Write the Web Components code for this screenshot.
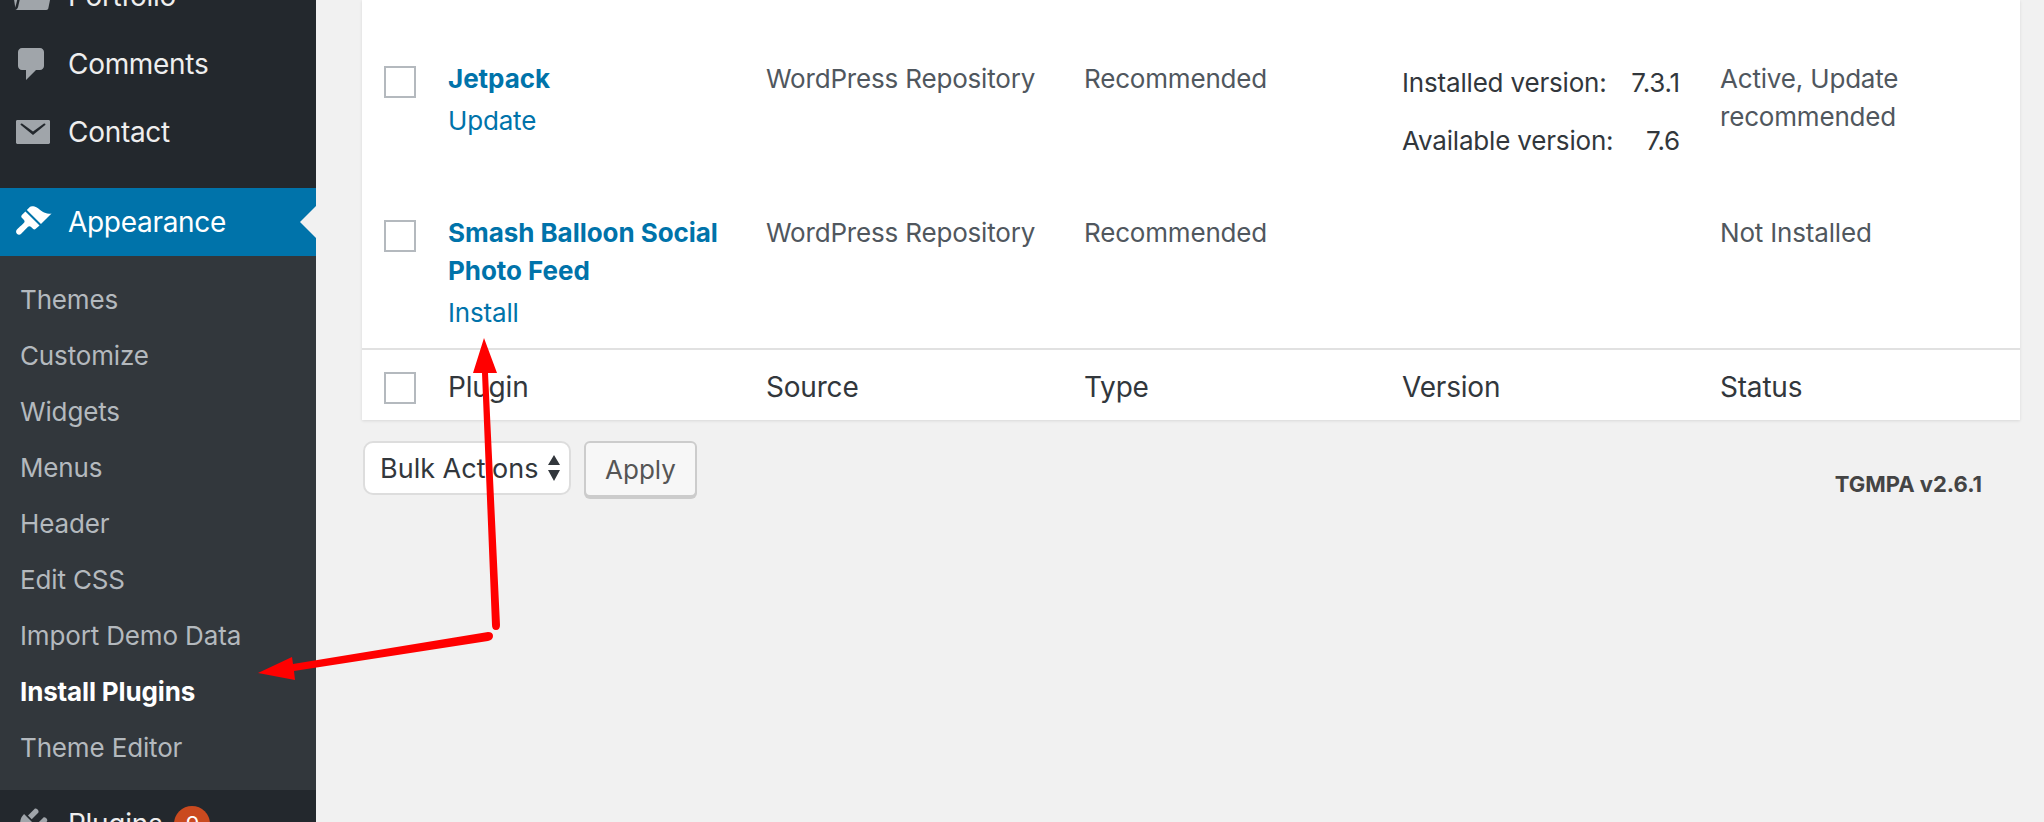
<!DOCTYPE html>
<html>
<head>
<meta charset="utf-8">
<title>Install Plugins</title>
<style>
  html, body { margin: 0; height: 822px; overflow: hidden; background: #f1f1f1; }
  body { position: relative; display: flex; font-family: Inter, "Liberation Sans", sans-serif; font-size: 26px; }
  admin-main { flex: 1; }
  .arrows { position: absolute; left: 0; top: 0; pointer-events: none; }
</style>
</head>
<body>
<admin-menu>
  <menu-item label="Portfolio" icon="portfolio"></menu-item>
  <menu-item label="Comments" icon="comments"></menu-item>
  <menu-item label="Contact" icon="email"></menu-item>
  <menu-item class="sep" label="Appearance" icon="brush" current></menu-item>
  <sub-menu>
    <a>Themes</a><a>Customize</a><a>Widgets</a><a>Menus</a><a>Header</a><a>Edit CSS</a><a>Import Demo Data</a><a class="on">Install Plugins</a><a>Theme Editor</a>
  </sub-menu>
  <menu-item label="Plugins" icon="plugin" badge="9"></menu-item>
</admin-menu>

<admin-main>
  <plugin-table>
    <plugin-row name="Jetpack" action="Update" source="WordPress Repository" type="Recommended" installed="7.3.1" available="7.6">Active, Update recommended</plugin-row>
    <plugin-row name="Smash Balloon Social Photo Feed" action="Install" source="WordPress Repository" type="Recommended">Not Installed</plugin-row>
    <plugin-row footer name="Plugin" source="Source" type="Type" version="Version">Status</plugin-row>
  </plugin-table>
  <table-nav></table-nav>
</admin-main>

<svg class="arrows" width="2044" height="822" fill="#f00" stroke="none">
  <path d="M484 338L497 373L488 373L500 625Q500 630 496 630Q492 630 492 625L482 373L473 373Z"/>
  <path d="M258 673L292 657L293 664L488 632Q493 632 493 636Q493 640 488 641L294 671L295 680Z"/>
</svg>

<script>
const ICONS = {
  portfolio: '<path d="M4 5H.78c-.37 0-.74.32-.69.84l1.56 9.99S3.5 8.47 3.86 6.7c.11-.53.61-.7.98-.7H10s-.7-2.08-.77-2.31C9.11 3.25 8.89 3 8.45 3H5.14c-.36 0-.7.23-.8.64C4.26 3.87 4 5 4 5zM2.67 16.25c-.31.47-.76.75-1.26.75h15.73c.54 0 .92-.31 1.03-.83.44-2.19 1.68-8.44 1.68-8.44.07-.5-.3-.73-.62-.73H5.59c-.32 0-.63.19-.69.5 0 0-1.59 6.7-1.72 7.33-.07.37-.22.99-.51 1.42z"/>',
  comments: '<path d="M5 2h9c1.1 0 2 .9 2 2v7c0 1.1-.9 2-2 2h-2l-5 5v-5H5c-1.1 0-2-.9-2-2V4c0-1.1.9-2 2-2z"/>',
  email: '<path fill-rule="evenodd" d="M2.7 4h15.6c.4 0 .7.3.7.7v10.6c0 .4-.3.7-.7.7H2.700c-.4 0-.7-.3-.7-.7V4.700c0-.4.3-.7.7-.7zM5 5.800c-.5-.3-1 .3-.6.7l6.100 5 6.100-5c.4-.4-.1-1-.6-.7l-5.500 3.900z"/>',
  brush: '<path d="M14.48 11.06L7.41 3.99l1.5-1.5c.5-.56 2.3-.47 3.51.32 1.21.8 1.43 1.28 2.91 2.1 1.18.64 2.45 1.26 4.45.85zm-.71.71L6.7 4.7 4.93 6.47c-.39.39-.39 1.02 0 1.41l1.06 1.06c.39.39.39 1.03 0 1.42-1.2 1.2-2.94 2.83-3.52 3.4-.58.59-.58 1.54 0 2.12.59.59 1.54.59 2.12 0 .58-.58 2.2-2.32 3.4-3.52.39-.39 1.03-.39 1.42 0l1.06 1.06c.39.39 1.02.39 1.41 0z"/>',
  plugin: '<path d="M13.11 4.36L9.87 7.6 8 5.73l3.24-3.24c.35-.34 1.05-.2 1.56.32.52.51.66 1.21.31 1.55zm-8 1.77l.91-1.12 9.01 9.01-1.19.84c-.71.71-2.63 1.16-3.82 1.16H6.14L4.9 17.26c-.59.59-1.54.59-2.12 0-.59-.58-.59-1.53 0-2.12l1.24-1.24v-3.88c0-1.13.4-3.19 1.09-3.89zm7.26 3.97l3.24-3.24c.34-.35 1.04-.21 1.55.31.52.51.66 1.21.31 1.55l-3.24 3.25z"/>'
};

class AdminMenu extends HTMLElement {
  constructor() {
    super();
    this.attachShadow({ mode: 'open' }).innerHTML = `
      <style>
        :host { display: block; width: 316px; flex: none; height: 900px; margin-top: -38px; background: #23282d; }
      </style>
      <slot></slot>`;
  }
}

class MenuItem extends HTMLElement {
  constructor() {
    super();
    this.attachShadow({ mode: 'open' });
  }
  connectedCallback() {
    const label = this.getAttribute('label');
    const badge = this.getAttribute('badge');
    this.shadowRoot.innerHTML = `
      <style>
        :host { display: flex; align-items: center; height: 68px; position: relative; color: #eee; font-size: 28px; letter-spacing: -.3px; }
        :host(.sep) { margin-top: 22px; }
        :host([current]) { background: #0073aa; color: #fff; }
        :host([current])::after {
          content: ""; position: absolute; right: 0; top: 50%; margin-top: -16px;
          border: 16px solid transparent; border-right-color: #f1f1f1; border-left-width: 0;
        }
        svg { width: 40px; height: 40px; margin: 0 16px 0 12px; fill: #a0a5aa; flex: none; }
        :host([current]) svg { fill: #fff; }
        .badge {
          display: inline-block; width: 36px; height: 36px; line-height: 36px; margin-left: 12px; border-radius: 50%;
          background: #ca4a1f; color: #fff; font-size: 22px; text-align: center;
        }
      </style>
      <svg viewBox="0 0 20 20">${ICONS[this.getAttribute('icon')]}</svg>
      <span>${label}</span>${badge ? `<span class="badge">${badge}</span>` : ''}`;
  }
}

class SubMenu extends HTMLElement {
  constructor() {
    super();
    this.attachShadow({ mode: 'open' }).innerHTML = `
      <style>
        :host { display: block; background: #32373c; padding: 15px 0 15px; color: #b4b9be; }
        ::slotted(a) { display: block; height: 56px; line-height: 57px; padding-left: 20px; font-size: 26px; letter-spacing: -.15px; }
        ::slotted(a.on) { color: #fff; font-weight: 700; }
      </style>
      <slot></slot>`;
  }
}

class PluginTable extends HTMLElement {
  constructor() {
    super();
    this.attachShadow({ mode: 'open' }).innerHTML = `
      <style>
        :host { display: block; margin: 0 24px 0 46px; padding-top: 44px; background: #fff; box-shadow: 0 1px 3px rgba(0,0,0,.1); }
      </style>
      <slot></slot>`;
  }
}

class PluginRow extends HTMLElement {
  constructor() {
    super();
    this.attachShadow({ mode: 'open' });
  }
  connectedCallback() {
    const a = n => this.getAttribute(n);
    const footer = this.hasAttribute('footer');
    let version = a('version') || '';
    if (a('installed')) {
      version = `<div class="ver"><span>Installed version:</span><span>${a('installed')}</span>
        <span>Available version:</span><span>${a('available')}</span></div>`;
    }
    this.shadowRoot.innerHTML = `
      <style>
        :host { display: grid; grid-template-columns: 66px 318px 318px 318px 318px 320px; color: #50575e; line-height: 38px; letter-spacing: -.18px; min-height: 150px; }
        :host([name="Jetpack"]) { min-height: 154px; }
        :host([footer]) { border-top: 2px solid #e1e1e1; color: #32373c; min-height: 0; height: 70px; box-sizing: content-box; align-items: center; font-size: 28px; letter-spacing: -.2px; }
        .cell { padding: 16px 20px 16px 20px; box-sizing: border-box; }
        :host([footer]) .cell { padding-top: 3px; padding-bottom: 0; }
        .check { padding: 22px 0 0 22px; }
        :host([footer]) .check { padding: 5px 0 0 22px; }
        .box { display: block; width: 32px; height: 32px; box-sizing: border-box; border: 2px solid #b4b9be; background: #fff; }
        .name { font-weight: 700; color: #0073aa; letter-spacing: -.05px; }
        .action { color: #0073aa; margin-top: 4px; }
        .ver { display: grid; grid-template-columns: 1fr auto; row-gap: 20px; color: #32373c; padding-top: 4px; }
        .ver span:nth-child(even) { text-align: right; }
      </style>
      <div class="cell check"><span class="box"></span></div>
      <div class="cell">
        <div class="${footer ? '' : 'name'}">${a('name')}</div>
        ${a('action') ? `<div class="action">${a('action')}</div>` : ''}
      </div>
      <div class="cell">${a('source')}</div>
      <div class="cell">${a('type')}</div>
      <div class="cell">${version}</div>
      <div class="cell"><slot></slot></div>`;
  }
}

class TableNav extends HTMLElement {
  constructor() {
    super();
    this.attachShadow({ mode: 'open' }).innerHTML = `
      <style>
        :host { display: flex; align-items: flex-start; gap: 13px; margin: 21px 62px 0 47px; position: relative; }
        .select {
          display: flex; align-items: center; justify-content: space-between; width: 208px; height: 54px; box-sizing: border-box;
          padding: 0 8px 0 15px; background: #fff; border: 2px solid #ddd; border-radius: 10px; color: #32373c; font-size: 27px;
        }
        .apply {
          display: flex; align-items: center; justify-content: center; width: 113px; height: 56px; box-sizing: border-box;
          background: #f7f7f7; border: 2px solid #ccc; border-radius: 6px; box-shadow: 0 2px 0 #ccc; color: #555;
        }
        .version { margin-left: auto; margin-top: 30px; font-size: 22px; font-weight: 700; color: #444; }
      </style>
      <div class="select"><span>Bulk Actions</span>
        <svg width="14" height="26" viewBox="0 0 14 26" fill="#32373c"><path d="M7 0L13 10H1ZM7 26L13 15H1Z"/></svg>
      </div>
      <div class="apply">Apply</div>
      <div class="version">TGMPA v2.6.1</div>`;
  }
}

customElements.define('admin-menu', AdminMenu);
customElements.define('menu-item', MenuItem);
customElements.define('sub-menu', SubMenu);
customElements.define('plugin-table', PluginTable);
customElements.define('plugin-row', PluginRow);
customElements.define('table-nav', TableNav);
</script>
</body>
</html>
